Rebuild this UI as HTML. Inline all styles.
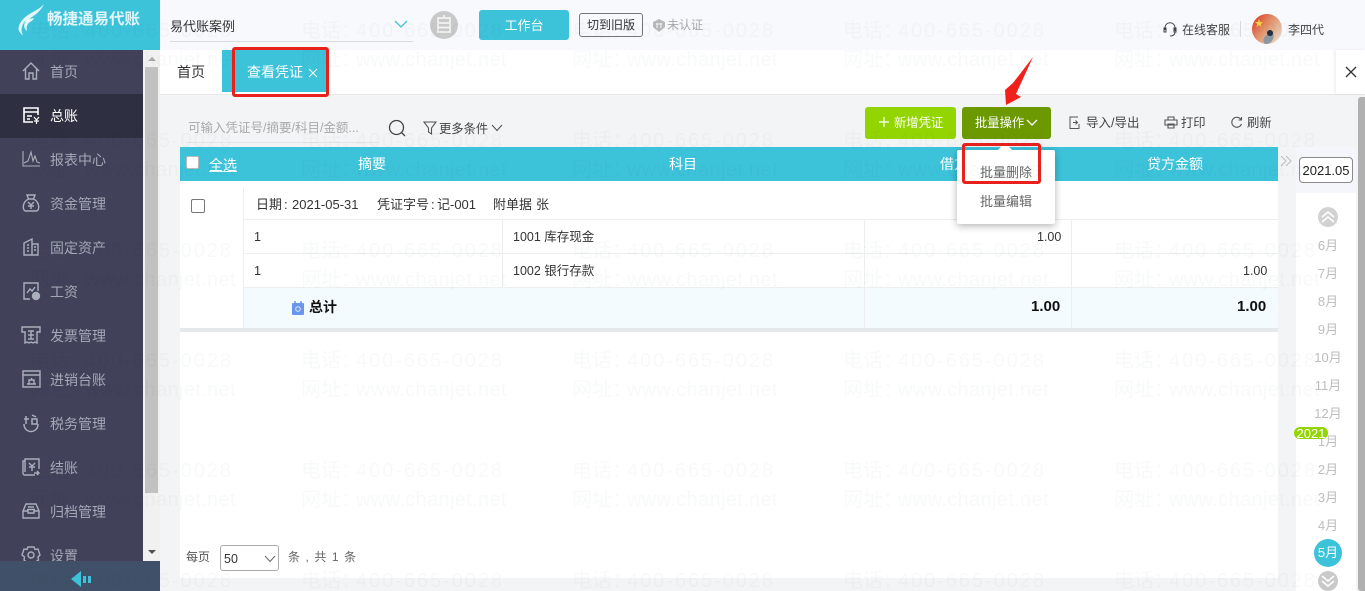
<!DOCTYPE html>
<html lang="zh-CN">
<head>
<meta charset="utf-8">
<title>查看凭证</title>
<style>
html,body{margin:0;padding:0;width:1365px;height:591px;overflow:hidden;background:#f3f4f6;}
body{position:relative;font-family:"Liberation Sans","Noto Sans CJK SC",sans-serif;color:#333;font-size:13px;}
.a{position:absolute;}
.t{position:absolute;white-space:nowrap;line-height:20px;height:20px;}
.c{text-align:center;}
.nav{position:absolute;left:50px;font-size:14px;line-height:20px;color:#a3a8b6;white-space:nowrap;}
.ic{position:absolute;left:21px;width:20px;height:20px;fill:none;stroke:#a9b0bc;stroke-width:1.4;}
.wm{position:absolute;white-space:nowrap;font-size:20px;line-height:24px;color:rgba(40,50,70,.032);pointer-events:none;}
.p{letter-spacing:1.950px;margin-top:1px;}
.w{letter-spacing:.35px;}
.wm i{font-style:normal;display:inline-block;width:55px;letter-spacing:0;overflow:hidden;vertical-align:top;}
.m{position:absolute;left:1298px;width:60px;text-align:center;font-size:13px;line-height:20px;color:#bdbdbd;}
.line{position:absolute;background:#eceef0;}
</style>
</head>
<body>

<!-- top bar -->
<div class="a" style="left:160px;top:0;width:1205px;height:50px;background:#f8f9fd;"></div>
<!-- logo header -->
<div class="a" style="left:0;top:0;width:160px;height:50px;background:#3cc3da;"></div>
<svg class="a" style="left:16px;top:3px;" width="30" height="32" viewBox="0 0 30 32">
<path d="M28 1C24 6 18 8 12 12C6 16 1 23 3 28C4 30 6 32 7 32C4 27 6 21 10 17C7 22 8 26 11 28C10 24 11 21 14 19C16 18 17 17 18 15L13 16C19 12 25 8 28 1Z" fill="#e6f7fa"/>
</svg>
<div class="t" style="left:47px;top:10px;font-size:15.500px;color:#e2f5f8;font-weight:bold;">畅捷通易代账</div>

<div class="t" style="left:170px;top:17px;color:#333;">易代账案例</div>
<div class="a" style="left:170px;top:41px;width:243px;height:1px;background:#d9dbe0;"></div>
<svg class="a" style="left:394px;top:19px;" width="14" height="10" viewBox="0 0 14 10"><path d="M1 2L7 8L13 2" fill="none" stroke="#3cc3da" stroke-width="1.300"/></svg>
<svg class="a" style="left:430px;top:11px;" width="28" height="28" viewBox="0 0 28 28"><circle cx="14" cy="14" r="14" fill="#c9c9c9"/><path d="M8 7H20V21H8ZM8 12H20M8 16.500H20M14 4V7" fill="none" stroke="#f3f3f3" stroke-width="1.700"/></svg>
<div class="a c" style="left:479px;top:10px;width:90px;height:30px;background:#3cc3da;border-radius:3px;color:#fff;line-height:31px;">工作台</div>
<div class="a c" style="left:579px;top:13px;width:62px;height:22px;border:1px solid #777;border-radius:3px;color:#333;font-size:12px;line-height:22px;">切到旧版</div>
<svg class="a" style="left:652px;top:18px;" width="14" height="15" viewBox="0 0 14 15"><path d="M7 1L13 4V9L7 14L1 9V4Z" fill="#b9b9b9"/><path d="M5 5V10M9 5V10M4 6H10" stroke="#f8f9fd" fill="none"/></svg>
<div class="t" style="left:667px;top:15px;font-size:12px;color:#a8a8a8;">未认证</div>

<svg class="a" style="left:1162px;top:21px;" width="16" height="18" viewBox="0 0 16 18"><path d="M3 9V7C3 0 13 0 13 7V10M3 7H2V11H4V7ZM12 7H14V11H12ZM13 11C13 14 11 15 8 15" fill="none" stroke="#444" stroke-width="1"/></svg>
<div class="t" style="left:1182px;top:20px;font-size:12px;color:#444;">在线客服</div>
<div class="a" style="left:1240px;top:21px;width:1px;height:16px;background:#d8d8d8;"></div>
<svg class="a" style="left:1252px;top:14px;" width="30" height="30" viewBox="0 0 30 30">
<defs><linearGradient id="ag" x1="0" y1="0" x2="1" y2=".8"><stop offset="0" stop-color="#d92e1e"/><stop offset=".45" stop-color="#e08a62"/><stop offset="1" stop-color="#e9dccb"/></linearGradient></defs>
<circle cx="15" cy="15" r="15" fill="url(#ag)"/>
<path d="M7 5L8 8H11L8.700 10L9.500 13L7 11L4.500 13L5.300 10L3 8H6Z" fill="#f6d33c"/>
<path d="M13 30C9 26 13 22 17 19C19 15 23 20 21 25C20 28 17 30 13 30Z" fill="#8a97a0"/>
<circle cx="18" cy="19" r="3" fill="#20303f"/>
</svg>
<div class="t" style="left:1288px;top:20px;font-size:12px;color:#444;">李四代</div>

<!-- tabs -->
<div class="a" style="left:160px;top:50px;width:1205px;height:44px;background:#fff;"></div>
<div class="a" style="left:160px;top:94px;width:1205px;height:1px;background:#e8e8e8;"></div>
<div class="t" style="left:177px;top:62px;font-size:14px;color:#333;">首页</div>
<div class="a" style="left:222px;top:50px;width:104px;height:42px;background:#3cc3da;"></div>
<div class="t" style="left:247px;top:62px;font-size:14px;color:#fff;">查看凭证</div>
<svg class="a" style="left:308px;top:68px;" width="10" height="10" viewBox="0 0 10 10"><path d="M1 1L9 9M9 1L1 9" stroke="#fff" stroke-width="1"/></svg>
<div class="a" style="left:232px;top:47px;width:91px;height:44px;border:3px solid #e8211d;border-radius:3px;"></div>
<div class="a" style="left:1336px;top:50px;width:29px;height:44px;background:#fff;box-shadow:-2px 0 3px rgba(0,0,0,.06);"></div>
<svg class="a" style="left:1345px;top:66px;" width="12" height="12" viewBox="0 0 12 12"><path d="M1 1L11 11M11 1L1 11" stroke="#333" stroke-width="1.300"/></svg>

<!-- toolbar -->
<div class="t" style="left:188px;top:118px;font-size:12.500px;color:#aaa;">可输入凭证号/摘要/科目/金额...</div>
<div class="a" style="left:186px;top:142px;width:192px;height:1px;background:#e4e5e8;"></div>
<svg class="a" style="left:388px;top:119px;" width="19" height="19" viewBox="0 0 19 19"><circle cx="8.500" cy="8.500" r="7" fill="none" stroke="#444" stroke-width="1.300"/><path d="M13.500 13.500L17 17" stroke="#444" stroke-width="1.300"/></svg>
<svg class="a" style="left:423px;top:121px;" width="14" height="14" viewBox="0 0 14 14"><path d="M1 1H13L8.500 7V13L5.500 11V7Z" fill="none" stroke="#555" stroke-width="1.100"/></svg>
<div class="t" style="left:439px;top:119px;font-size:12.300px;color:#444;">更多条件</div>
<svg class="a" style="left:491px;top:124px;" width="12" height="8" viewBox="0 0 12 8"><path d="M1 1L6 6.500L11 1" fill="none" stroke="#555" stroke-width="1.100"/></svg>

<div class="a" style="left:865px;top:107px;width:91px;height:32px;background:#93d500;border-radius:3px;"></div>
<svg class="a" style="left:879px;top:117px;" width="10" height="10" viewBox="0 0 10 10"><path d="M5 0V10M0 5H10" stroke="#fff" stroke-width="1.200"/></svg>
<div class="t" style="left:894px;top:113px;font-size:12.300px;color:#fff;">新增凭证</div>
<div class="a" style="left:962px;top:107px;width:89px;height:32px;background:#6c9900;border-radius:3px;"></div>
<div class="t" style="left:975px;top:113px;font-size:12.300px;color:#fff;">批量操作</div>
<svg class="a" style="left:1026px;top:119px;" width="12" height="8" viewBox="0 0 12 8"><path d="M1 1L6 6L11 1" fill="none" stroke="#fff" stroke-width="1.300"/></svg>

<svg class="a" style="left:1069px;top:115px;" width="12" height="15" viewBox="0 0 12 15"><path d="M9 2H1V13.500H10V9M4 7.500H8M6.500 5.500L8.500 7.500L6.500 9.500" fill="none" stroke="#555" stroke-width="1"/></svg>
<div class="t" style="left:1086px;top:113px;font-size:12.500px;color:#444;">导入/导出</div>
<svg class="a" style="left:1164px;top:116px;" width="14" height="13" viewBox="0 0 14 13"><path d="M4 4V1H10V4M1 4H13V9H1ZM4 8H10V12H4Z" fill="none" stroke="#555" stroke-width="1.100"/></svg>
<div class="t" style="left:1181px;top:113px;font-size:12.300px;color:#444;">打印</div>
<svg class="a" style="left:1230px;top:116px;" width="13" height="13" viewBox="0 0 13 13"><path d="M11 3.500A5 5 0 1 0 11.500 8M11.500 1V4H8.500" fill="none" stroke="#555" stroke-width="1.100"/></svg>
<div class="t" style="left:1247px;top:113px;font-size:12.300px;color:#444;">刷新</div>

<!-- table -->
<div class="a" style="left:180px;top:181px;width:1098px;height:397px;background:#fff;"></div>
<div class="a" style="left:180px;top:147px;width:1098px;height:34px;background:#3cc3da;"></div>
<div class="a" style="left:186px;top:156px;width:11px;height:11px;background:#fff;border:1px solid #bbb;border-radius:2px;"></div>
<div class="t" style="left:209px;top:155px;font-size:14px;color:#fff;">全选</div>
<div class="a" style="left:209px;top:171px;width:28px;height:1px;background:#e8f8fb;"></div>
<div class="t" style="left:358px;top:154px;font-size:14px;color:#fff;">摘要</div>
<div class="t" style="left:669px;top:154px;font-size:14px;color:#fff;">科目</div>
<div class="t" style="left:940px;top:154px;font-size:14px;color:#fff;">借方金额</div>
<div class="t" style="left:1147px;top:154px;font-size:14px;color:#fff;">贷方金额</div>

<div class="a" style="left:243px;top:288px;width:1035px;height:40px;background:#f3fbfe;"></div>
<div class="line" style="left:243px;top:219px;width:1035px;height:1px;"></div>
<div class="line" style="left:243px;top:253px;width:1035px;height:1px;"></div>
<div class="line" style="left:243px;top:287px;width:1035px;height:1px;"></div>
<div class="line" style="left:243px;top:188px;width:1px;height:140px;"></div>
<div class="line" style="left:502px;top:220px;width:1px;height:67px;"></div>
<div class="line" style="left:864px;top:220px;width:1px;height:108px;"></div>
<div class="line" style="left:1071px;top:220px;width:1px;height:108px;"></div>
<div class="a" style="left:180px;top:328px;width:1098px;height:4px;background:#e6e9eb;"></div>

<div class="a" style="left:191px;top:199px;width:12px;height:12px;background:#fff;border:1px solid #777;border-radius:2px;"></div>
<div class="t" style="left:256px;top:195px;font-size:13px;color:#333;">日期</div>
<div class="t" style="left:284px;top:195px;font-size:13px;color:#333;">:</div>
<div class="t" style="left:292px;top:195px;font-size:13px;color:#333;">2021-05-31</div>
<div class="t" style="left:377px;top:195px;font-size:13px;color:#333;">凭证字号</div>
<div class="t" style="left:431px;top:195px;font-size:13px;color:#333;">:</div>
<div class="t" style="left:437px;top:195px;font-size:13px;color:#333;">记-001</div>
<div class="t" style="left:493px;top:195px;font-size:13px;color:#333;">附单据</div>
<div class="t" style="left:536px;top:195px;font-size:13px;color:#333;">张</div>
<div class="t" style="left:254px;top:227px;font-size:12.500px;">1</div>
<div class="t" style="left:254px;top:261px;font-size:12.500px;">1</div>
<div class="t" style="left:513px;top:227px;font-size:12.500px;">1001 库存现金</div>
<div class="t" style="left:513px;top:261px;font-size:12.500px;">1002 银行存款</div>
<div class="t" style="left:1037px;top:227px;font-size:12.500px;">1.00</div>
<div class="t" style="left:1243px;top:261px;font-size:12.500px;">1.00</div>
<svg class="a" style="left:292px;top:301px;" width="12" height="14" viewBox="0 0 12 14"><rect x="0" y="2" width="12" height="12" rx="1" fill="#6b96ee"/><path d="M3 0V3M9 0V3" stroke="#6b96ee" stroke-width="1.500"/><circle cx="6" cy="8" r="2.300" fill="none" stroke="#dbe6fb"/></svg>
<div class="t" style="left:309px;top:297px;font-size:14px;font-weight:bold;color:#111;">总计</div>
<div class="t" style="left:1031px;top:297px;font-size:15px;font-weight:bold;color:#111;">1.00</div>
<div class="t" style="left:1237px;top:297px;font-size:15px;font-weight:bold;color:#111;">1.00</div>

<!-- pager -->
<div class="t" style="left:186px;top:547px;font-size:12px;color:#555;">每页</div>
<div class="a" style="left:220px;top:545px;width:57px;height:24px;background:#fff;border:1px solid #aaa;border-radius:3px;"></div>
<div class="t" style="left:224px;top:549px;font-size:12.500px;color:#333;">50</div>
<svg class="a" style="left:264px;top:555px;" width="12" height="8" viewBox="0 0 12 8"><path d="M1 1L6 6.500L11 1" fill="none" stroke="#666" stroke-width="1"/></svg>
<div class="t" style="left:288px;top:547px;font-size:12px;color:#666;letter-spacing:1.100px;">条 , 共 1 条</div>

<!-- dropdown -->
<div class="a" style="left:957px;top:150px;width:98px;height:74px;background:#fff;border-radius:2px;box-shadow:0 2px 8px rgba(0,0,0,.3);"></div>
<div class="a" style="left:1000px;top:145px;width:10px;height:10px;background:#fff;transform:rotate(45deg);"></div>
<div class="t c" style="left:957px;top:163px;width:98px;font-size:13px;color:#666;">批量删除</div>
<div class="t c" style="left:957px;top:192px;width:98px;font-size:13px;color:#666;">批量编辑</div>
<div class="a" style="left:962px;top:143px;width:73px;height:35px;border:3px solid #e8211d;border-radius:3px;"></div>
<svg class="a" style="left:1000px;top:54px;" width="36" height="54" viewBox="0 0 36 54"><path d="M33 3L13 29L5 36L6 51L21 43L16 40Z" fill="#f0201a"/></svg>

<!-- right date panel -->
<div class="a" style="left:1278px;top:181px;width:18px;height:410px;background:#f3f4f6;"></div>
<div class="a" style="left:1296px;top:147px;width:60px;height:444px;background:#fff;"></div>
<div class="a" style="left:1296px;top:147px;width:60px;height:46px;background:#f5f6fb;"></div>
<div class="a c" style="left:1299px;top:157px;width:52px;height:24px;background:#fff;border:1px solid #8a8a8a;border-radius:4px;line-height:25px;font-size:13px;color:#222;">2021.05</div>
<svg class="a" style="left:1280px;top:155px;" width="12" height="12" viewBox="0 0 12 12"><path d="M1 1L6 6L1 11M6 1L11 6L6 11" fill="none" stroke="#bbb" stroke-width="1"/></svg>
<svg class="a" style="left:1318px;top:207px;" width="20" height="20" viewBox="0 0 20 20"><circle cx="10" cy="10" r="10" fill="#d2d2d2"/><path d="M4 10L10 5L16 10M4 15L10 10L16 15" fill="none" stroke="#fff" stroke-width="1.500"/></svg>
<div class="m" style="top:236px;">6月</div>
<div class="m" style="top:264px;">7月</div>
<div class="m" style="top:292px;">8月</div>
<div class="m" style="top:320px;">9月</div>
<div class="m" style="top:348px;">10月</div>
<div class="m" style="top:376px;">11月</div>
<div class="m" style="top:404px;">12月</div>
<div class="m" style="top:432px;">1月</div>
<div class="a c" style="left:1294px;top:427px;width:34px;height:12px;background:#93d500;border-radius:6px;color:#fff;font-size:13px;line-height:13px;">2021</div>
<div class="m" style="top:460px;">2月</div>
<div class="m" style="top:488px;">3月</div>
<div class="m" style="top:516px;">4月</div>
<div class="a c" style="left:1314px;top:539px;width:28px;height:28px;background:#3cc3da;border-radius:50%;color:#fff;line-height:28px;font-size:13px;">5月</div>
<svg class="a" style="left:1318px;top:571px;" width="20" height="20" viewBox="0 0 20 20"><circle cx="10" cy="10" r="10" fill="#c9c9c9"/><path d="M4 5L10 10L16 5M4 10L10 15L16 10" fill="none" stroke="#fff" stroke-width="1.500"/></svg>
<div class="a" style="left:1358px;top:97px;width:7px;height:494px;background:#b0b0b0;border-radius:3px 0 0 3px;"></div>

<!-- sidebar -->
<div class="a" style="left:0;top:50px;width:143px;height:511px;background:#414159;"></div>
<div class="a" style="left:0;top:94px;width:143px;height:44px;background:#2e2f40;"></div>
<div class="a" style="left:143px;top:50px;width:17px;height:511px;background:#f1f1f1;"></div>
<div class="a" style="left:145px;top:67px;width:13px;height:426px;background:#c1c1c1;"></div>
<div class="a" style="left:148px;top:57px;border:4px solid transparent;border-bottom:4px solid #a8a8a8;border-top:0;"></div>
<div class="a" style="left:148px;top:550px;border:4px solid transparent;border-top:4px solid #505050;border-bottom:0;"></div>

<svg class="ic" style="top:61px;" viewBox="0 0 20 20"><path d="M2 10L10 2L18 10M4.500 8V18H8V12H12V18H15.500V8"/></svg>
<div class="nav" style="top:62px;">首页</div>
<svg class="ic" style="top:105px;stroke:#fff;" viewBox="0 0 20 20"><path d="M12 17H3V3H17V10M3 7H17M6 11H11M6 14H9" stroke-width="1.600"/><path d="M13 12L15.500 15L18 12M15.500 15V19M13 16H18" stroke-width="1.200"/></svg>
<div class="nav" style="top:106px;color:#fff;">总账</div>
<svg class="ic" style="top:149px;" viewBox="0 0 20 20"><path d="M2 2V17H19" stroke-width="1.100"/><path d="M3 14L7 12L10 3L12 12L14 7L16 13L19 14" stroke-width="1.100"/></svg>
<div class="nav" style="top:150px;">报表中心</div>
<svg class="ic" style="top:193px;" viewBox="0 0 20 20"><path d="M6 2H14L12.500 6H7.500ZM7.500 6C1 9 1 18 5 18H15C19 18 19 9 12.500 6M7 9L10 12L13 9M10 12V16M7 13H13"/></svg>
<div class="nav" style="top:194px;">资金管理</div>
<svg class="ic" style="top:237px;" viewBox="0 0 20 20"><path d="M3 18V6L11 2V18ZM11 7H17V18H3M6 8H8M6 11H8M6 14H8M13 10H15M13 13H15"/></svg>
<div class="nav" style="top:238px;">固定资产</div>
<svg class="ic" style="top:281px;" viewBox="0 0 20 20"><path d="M9 18H3V2H17V10M6 12L9 8L11 10L14 6"/><circle cx="15" cy="15" r="3.500" fill="#a9b0bc"/></svg>
<div class="nav" style="top:282px;">工资</div>
<svg class="ic" style="top:325px;" viewBox="0 0 20 20"><path d="M1 2H19V7H16V18L14 17L12 18L10 17L8 18L6 17L4 18V7H1ZM7 6H13M7 10H13M7 14H13M10 6V14"/></svg>
<div class="nav" style="top:326px;">发票管理</div>
<svg class="ic" style="top:369px;" viewBox="0 0 20 20"><path d="M2 2H19V18H2ZM2 6H19M6 15H15M8 15V11H13V15M10.500 9V11"/></svg>
<div class="nav" style="top:370px;">进销台账</div>
<svg class="ic" style="top:413px;" viewBox="0 0 20 20"><path d="M3 11C3 21 17 21 17 11" stroke-width="1.500"/><path d="M5 3V11M3 6H8M11 2L15 4M11 6H16V11H11Z" stroke-width="1.500"/></svg>
<div class="nav" style="top:414px;">税务管理</div>
<svg class="ic" style="top:457px;" viewBox="0 0 20 20"><path d="M4 4H2V16C2 18 4 18 4 18H14M4 15V2H18V12M8 6L11 9L14 6M11 9V14M8 10H14M13 16H18M16 14L18 16L16 18"/></svg>
<div class="nav" style="top:458px;">结账</div>
<svg class="ic" style="top:501px;" viewBox="0 0 20 20"><path d="M5 3H15L18 10V17H2V10ZM2 10H7V12H13V10H18M7 6H13M6 8.500H14"/></svg>
<div class="nav" style="top:502px;">归档管理</div>
<svg class="ic" style="top:545px;" viewBox="0 0 20 20"><path d="M7 2H13L14 4.500L17 4L19 10L17 12L17.500 15L13 18H7L3 15L3.500 12L1 10L3 4L6 4.500Z"/><circle cx="10" cy="10" r="3"/></svg>
<div class="nav" style="top:546px;">设置</div>

<div class="a" style="left:0;top:561px;width:160px;height:30px;background:#3f5068;"></div>
<svg class="a" style="left:70px;top:570px;" width="22" height="18" viewBox="0 0 22 18"><path d="M1 9L11 1V17Z" fill="#3cc3da"/><rect x="13" y="6" width="3" height="7" fill="#3cc3da"/><rect x="18" y="6" width="3" height="7" fill="#3cc3da"/></svg>

<!-- watermark -->
<div class="wm p" style="left:30px;top:18px;"><i>电话：</i>400-665-0028</div><div class="wm p" style="left:301px;top:18px;"><i>电话：</i>400-665-0028</div><div class="wm p" style="left:572px;top:18px;"><i>电话：</i>400-665-0028</div><div class="wm p" style="left:843px;top:18px;"><i>电话：</i>400-665-0028</div><div class="wm p" style="left:1114px;top:18px;"><i>电话：</i>400-665-0028</div>
<div class="wm w" style="left:30px;top:48px;"><i>网址：</i>www.chanjet.net</div><div class="wm w" style="left:301px;top:48px;"><i>网址：</i>www.chanjet.net</div><div class="wm w" style="left:572px;top:48px;"><i>网址：</i>www.chanjet.net</div><div class="wm w" style="left:843px;top:48px;"><i>网址：</i>www.chanjet.net</div><div class="wm w" style="left:1114px;top:48px;"><i>网址：</i>www.chanjet.net</div>
<div class="wm p" style="left:30px;top:128px;"><i>电话：</i>400-665-0028</div><div class="wm p" style="left:301px;top:128px;"><i>电话：</i>400-665-0028</div><div class="wm p" style="left:572px;top:128px;"><i>电话：</i>400-665-0028</div><div class="wm p" style="left:843px;top:128px;"><i>电话：</i>400-665-0028</div><div class="wm p" style="left:1114px;top:128px;"><i>电话：</i>400-665-0028</div>
<div class="wm w" style="left:30px;top:158px;"><i>网址：</i>www.chanjet.net</div><div class="wm w" style="left:301px;top:158px;"><i>网址：</i>www.chanjet.net</div><div class="wm w" style="left:572px;top:158px;"><i>网址：</i>www.chanjet.net</div><div class="wm w" style="left:843px;top:158px;"><i>网址：</i>www.chanjet.net</div><div class="wm w" style="left:1114px;top:158px;"><i>网址：</i>www.chanjet.net</div>
<div class="wm p" style="left:30px;top:238px;"><i>电话：</i>400-665-0028</div><div class="wm p" style="left:301px;top:238px;"><i>电话：</i>400-665-0028</div><div class="wm p" style="left:572px;top:238px;"><i>电话：</i>400-665-0028</div><div class="wm p" style="left:843px;top:238px;"><i>电话：</i>400-665-0028</div><div class="wm p" style="left:1114px;top:238px;"><i>电话：</i>400-665-0028</div>
<div class="wm w" style="left:30px;top:268px;"><i>网址：</i>www.chanjet.net</div><div class="wm w" style="left:301px;top:268px;"><i>网址：</i>www.chanjet.net</div><div class="wm w" style="left:572px;top:268px;"><i>网址：</i>www.chanjet.net</div><div class="wm w" style="left:843px;top:268px;"><i>网址：</i>www.chanjet.net</div><div class="wm w" style="left:1114px;top:268px;"><i>网址：</i>www.chanjet.net</div>
<div class="wm p" style="left:30px;top:348px;"><i>电话：</i>400-665-0028</div><div class="wm p" style="left:301px;top:348px;"><i>电话：</i>400-665-0028</div><div class="wm p" style="left:572px;top:348px;"><i>电话：</i>400-665-0028</div><div class="wm p" style="left:843px;top:348px;"><i>电话：</i>400-665-0028</div><div class="wm p" style="left:1114px;top:348px;"><i>电话：</i>400-665-0028</div>
<div class="wm w" style="left:30px;top:378px;"><i>网址：</i>www.chanjet.net</div><div class="wm w" style="left:301px;top:378px;"><i>网址：</i>www.chanjet.net</div><div class="wm w" style="left:572px;top:378px;"><i>网址：</i>www.chanjet.net</div><div class="wm w" style="left:843px;top:378px;"><i>网址：</i>www.chanjet.net</div><div class="wm w" style="left:1114px;top:378px;"><i>网址：</i>www.chanjet.net</div>
<div class="wm p" style="left:30px;top:458px;"><i>电话：</i>400-665-0028</div><div class="wm p" style="left:301px;top:458px;"><i>电话：</i>400-665-0028</div><div class="wm p" style="left:572px;top:458px;"><i>电话：</i>400-665-0028</div><div class="wm p" style="left:843px;top:458px;"><i>电话：</i>400-665-0028</div><div class="wm p" style="left:1114px;top:458px;"><i>电话：</i>400-665-0028</div>
<div class="wm w" style="left:30px;top:488px;"><i>网址：</i>www.chanjet.net</div><div class="wm w" style="left:301px;top:488px;"><i>网址：</i>www.chanjet.net</div><div class="wm w" style="left:572px;top:488px;"><i>网址：</i>www.chanjet.net</div><div class="wm w" style="left:843px;top:488px;"><i>网址：</i>www.chanjet.net</div><div class="wm w" style="left:1114px;top:488px;"><i>网址：</i>www.chanjet.net</div>
<div class="wm p" style="left:30px;top:568px;"><i>电话：</i>400-665-0028</div><div class="wm p" style="left:301px;top:568px;"><i>电话：</i>400-665-0028</div><div class="wm p" style="left:572px;top:568px;"><i>电话：</i>400-665-0028</div><div class="wm p" style="left:843px;top:568px;"><i>电话：</i>400-665-0028</div><div class="wm p" style="left:1114px;top:568px;"><i>电话：</i>400-665-0028</div>

</body>
</html>
